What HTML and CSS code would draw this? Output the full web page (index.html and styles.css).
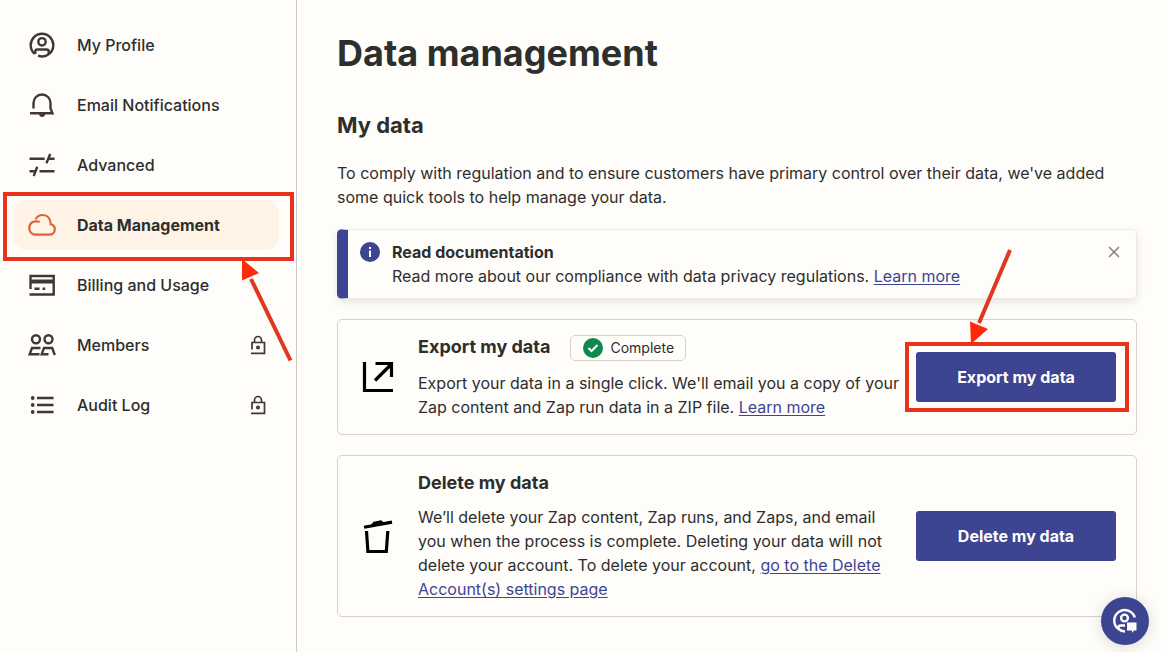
FILE: index.html
```html
<!DOCTYPE html>
<html lang="en">
<head>
<meta charset="utf-8">
<meta name="viewport" content="width=device-width, initial-scale=1">
<title>Data management</title>
<link rel="stylesheet" href="styles.css">
</head>
<body>
<div class="layout">
  <nav class="sidebar" aria-label="Settings">
    <a class="nav-item" href="#profile">
      <svg class="nav-icon" viewBox="0 0 28 28"><path d="M6.800 22.800A11.300 11.300 0 1 1 21.200 22.800A11.300 11.300 0 0 1 10 24.700"/><circle cx="14" cy="10.800" r="3.700"/><path d="M7.300 23v-2.500a2 2 0 0 1 2-2h9.400a2 2 0 0 1 2 2V23"/></svg>
      <span>My Profile</span>
    </a>
    <a class="nav-item" href="#notifications">
      <svg class="nav-icon" viewBox="0 0 28 28"><path d="M5.500 17.500V12a8.500 8.500 0 0 1 17 0v5.500l2 4.800H2"/><path class="solid" d="M11 22.500h6.200a3.100 3.400 0 0 1-6.200 0z"/></svg>
      <span>Email Notifications</span>
    </a>
    <a class="nav-item" href="#advanced">
      <svg class="nav-icon" viewBox="0 0 28 28"><path d="M1.500 7.800h15.200M20.500 7.800h6M22.200 3l-3.800 9.200M11.500 20.300h15M1.500 20.300h6M9.300 15.800L5.700 25"/></svg>
      <span>Advanced</span>
    </a>
    <a class="nav-item active" href="#data" aria-current="page">
      <svg class="nav-icon" viewBox="0 0 28 28"><path d="M11.800 10.800C5 9 1.300 12.200 1.300 17c0 4.200 2.900 6.700 6.500 6.700h13.400c3.400 0 5.600-2.300 5.600-5.400 0-2.600-1.600-4.400-4.100-5C22.500 7.500 19.200 4 14.800 4c-3 0-5.700 1.500-7.200 4.300"/></svg>
      <span>Data Management</span>
      <span class="callout callout-nav"></span>
      <svg class="arrow arrow-nav" viewBox="0 0 60 110"><path class="shaft" d="M50.500 103.500L11 22"/><path class="head" d="M2 2v21.500L19 16z"/></svg>
    </a>
    <a class="nav-item" href="#billing">
      <svg class="nav-icon" viewBox="0 0 28 28"><path d="M2.500 18V5h23.200v18.500H1.500M6.500 17.800h5M14.500 17.800h2.700"/><path d="M2.500 10.500h23.200" stroke-width="4"/></svg>
      <span>Billing and Usage</span>
    </a>
    <a class="nav-item" href="#members">
      <svg class="nav-icon" viewBox="0 0 28 28"><circle cx="8" cy="8.200" r="4"/><circle cx="20.500" cy="8.200" r="4"/><path d="M12.500 17H4L1.700 23.200h9.800M20.500 23.200h-6.800L16 17h8.200l2.600 7"/></svg>
      <span>Members</span>
      <svg class="lock" viewBox="0 0 16 20"><path d="M2 14.500V7.500h12.500v10.800H1M4.500 7.500V5a3.500 3.500 0 0 1 7 0v2.500"/><circle cx="8" cy="12.500" r="1.200"/></svg>
    </a>
    <a class="nav-item" href="#audit">
      <svg class="nav-icon" viewBox="0 0 28 28"><path d="M9 7h16.500M9 14h16.500M9 21h16.500"/><circle class="solid" cx="4.700" cy="7" r="1.900"/><circle class="solid" cx="4.700" cy="14" r="1.900"/><circle class="solid" cx="4.700" cy="21" r="1.900"/></svg>
      <span>Audit Log</span>
      <svg class="lock" viewBox="0 0 16 20"><path d="M2 14.500V7.500h12.500v10.800H1M4.500 7.500V5a3.500 3.500 0 0 1 7 0v2.500"/><circle cx="8" cy="12.500" r="1.200"/></svg>
    </a>
  </nav>

  <main class="content">
    <h1>Data management</h1>
    <h2>My data</h2>
    <p class="intro">To comply with regulation and to ensure customers have primary control over their data, we've added some quick tools to help manage your data.</p>

    <section class="banner">
      <svg class="info" viewBox="0 0 20 20"><circle cx="10" cy="10" r="10"/><path d="M9 5h2v2H9zM9 8.500h2V15H9z"/></svg>
      <div class="banner-text">
        <h3>Read documentation</h3>
        <p>Read more about our compliance with data privacy regulations. <a href="#compliance">Learn more</a></p>
      </div>
      <button class="close" type="button" aria-label="Close"><svg viewBox="0 0 12 12"><path d="M1 1l10 10M11 1L1 11"/></svg></button>
    </section>

    <section class="card">
      <svg class="card-icon" viewBox="0 0 40 40"><path d="M6.500 5v28.500H35M17 23.500L33 7.500M17.500 6.500h16V20"/></svg>
      <div class="card-body">
        <div class="card-title">
          <h3>Export my data</h3>
          <span class="badge"><svg viewBox="0 0 20 20"><circle cx="10" cy="10" r="10"/><path d="M5.500 10l3 3 6-6"/></svg>Complete</span>
        </div>
        <p>Export your data in a single click. We'll email you a copy of your Zap content and Zap run data in a ZIP file. <a href="#export">Learn more</a></p>
      </div>
      <div class="action">
        <button class="primary" type="button">Export my data</button>
        <span class="callout callout-button"></span>
        <svg class="arrow arrow-button" viewBox="0 0 50 100"><path class="shaft" d="M44 2L13 75"/><path class="head" d="M5 96L4 73.500l18 7.500z"/></svg>
      </div>
    </section>

    <section class="card">
      <svg class="card-icon" viewBox="0 0 40 40"><path d="M8.500 15l1.400 20.500h18.400L29.800 15"/><path d="M6 11.300l28-5.200"/><path class="solid" d="M13 9l2.500-3.300 7.500-1.400 3.500 2.500z"/></svg>
      <div class="card-body">
        <div class="card-title"><h3>Delete my data</h3></div>
        <p>We’ll delete your Zap content, Zap runs, and Zaps, and email you when the process is complete. Deleting your data will not delete your account. To delete your account, <a href="#delete">go to the Delete Account(s) settings page</a></p>
      </div>
      <div class="action"><button class="primary" type="button">Delete my data</button></div>
    </section>
  </main>
</div>
<button class="chat" type="button" aria-label="Support chat">
  <svg viewBox="0 0 28 28"><path d="M7.500 22A10.500 10.500 0 1 1 23.800 10.500M7.500 22A10.500 10.500 0 0 0 14 24.500"/><circle cx="13.500" cy="11" r="3.400"/><path d="M7.500 22v-1.500a2 2 0 0 1 2-2h4.500"/><path class="fill" d="M16 15.500h9.500v8H23L21 26v-2.500h-5z"/></svg>
</button>
</body>
</html>
```
FILE: styles.css
```css
* { box-sizing: border-box; }
body {
  margin: 0;
  background: #fffdf9;
  color: #2d2e2e;
  font: 16px/24px Inter, "Liberation Sans", sans-serif;
}
h1, h2, h3, p { margin: 0; }
svg { display: block; fill: none; stroke: currentColor; stroke-width: 2; }
button { font: inherit; cursor: pointer; border: 0; padding: 0; }
.solid { fill: currentColor; stroke: none; }

.layout { display: flex; min-height: 100vh; }

.sidebar {
  flex: 0 0 297px;
  display: flex;
  flex-direction: column;
  gap: 10px;
  padding: 20px 17px 20px 13px;
  border-right: 1px solid #cfcac5;
}
.nav-item {
  position: relative;
  display: flex;
  align-items: center;
  gap: 21px;
  height: 50px;
  padding: 0 13px 0 15px;
  border-radius: 14px;
  color: #2d2e2e;
  font-weight: 500;
  text-decoration: none;
}
.nav-icon { width: 28px; height: 28px; color: #413735; stroke-width: 2.4; }
.nav-item.active { background: #fff3e6; font-weight: 700; }
.active .nav-icon { color: #dd623c; stroke-width: 2.2; }
.lock { width: 16px; height: 20px; margin-left: auto; color: #413735; stroke-width: 1.7; }

.content { flex: 1; min-width: 0; padding: 31px 24px 32px 40px; }
h1 { font-size: 36px; line-height: 44px; font-weight: 700; }
h2 { margin-top: 35px; font-size: 22px; line-height: 30px; font-weight: 700; }
.intro { margin-top: 21px; }
.content a { color: #3d4592; text-underline-offset: 2px; }

.banner {
  display: flex;
  align-items: flex-start;
  gap: 12px;
  margin: 20px 0;
  padding: 10px 16px 10px 12px;
  border: 1px solid #ece9e4;
  border-left: 11px solid #3d4592;
  border-radius: 5px;
  box-shadow: 0 3px 8px rgba(0, 0, 0, 0.1);
}
.info { width: 20px; height: 20px; margin-top: 2px; stroke: none; }
.info circle { fill: #3d4592; }
.info path { fill: #fff; }
.banner-text { flex: 1; }
.banner h3 { font-size: 16px; line-height: 24px; font-weight: 700; }
.close { margin-top: 6px; background: none; color: #88827e; }
.close svg { width: 12px; height: 12px; stroke-width: 1.5; }

.card {
  display: grid;
  grid-template-columns: 44px 1fr 200px;
  align-items: center;
  gap: 16px;
  margin-bottom: 20px;
  padding: 15px 20px;
  border: 1px solid #d7d3c9;
  border-radius: 5px;
}
.card-icon { width: 40px; height: 40px; color: #000; stroke-width: 3.2; }
.card-title { display: flex; align-items: flex-start; gap: 20px; margin-bottom: 10px; }
.card h3 { font-size: 18px; line-height: 24px; font-weight: 700; }
.badge {
  display: flex;
  align-items: center;
  gap: 7px;
  height: 26px;
  padding: 0 11px 0 12px;
  border: 1px solid #d7d3c9;
  border-radius: 5px;
  font-size: 14px;
}
.badge svg { width: 20px; height: 20px; }
.badge circle { fill: #0f884e; stroke: none; }
.badge path { stroke: #fff; }
.action { position: relative; }
.primary {
  width: 100%;
  height: 50px;
  border-radius: 3px;
  background: #3d4592;
  color: #fffdf9;
  font-weight: 700;
}

.callout { position: absolute; border: 4px solid #e8321a; pointer-events: none; }
.callout-nav { inset: -8px -15px -11px -10px; }
.callout-button { inset: -10px -13px -10px -11px; }
.arrow { position: absolute; z-index: 2; pointer-events: none; }
.arrow .shaft { stroke: #e0371f; stroke-width: 4; }
.arrow .head { fill: #ff2a0a; stroke: none; }
.arrow-nav { width: 60px; height: 110px; top: 57px; left: 227px; }
.arrow-button { width: 50px; height: 100px; bottom: 54px; left: 50px; }

.chat {
  position: fixed;
  right: 12px;
  bottom: 7px;
  display: grid;
  place-items: center;
  width: 48px;
  height: 48px;
  border-radius: 50%;
  background: #3d4592;
  color: #fffdf9;
  box-shadow: 0 2px 16px rgba(0, 0, 0, 0.14);
}
.chat svg { width: 28px; height: 28px; stroke-width: 2.4; }
.chat .fill { fill: currentColor; stroke: none; }
```
